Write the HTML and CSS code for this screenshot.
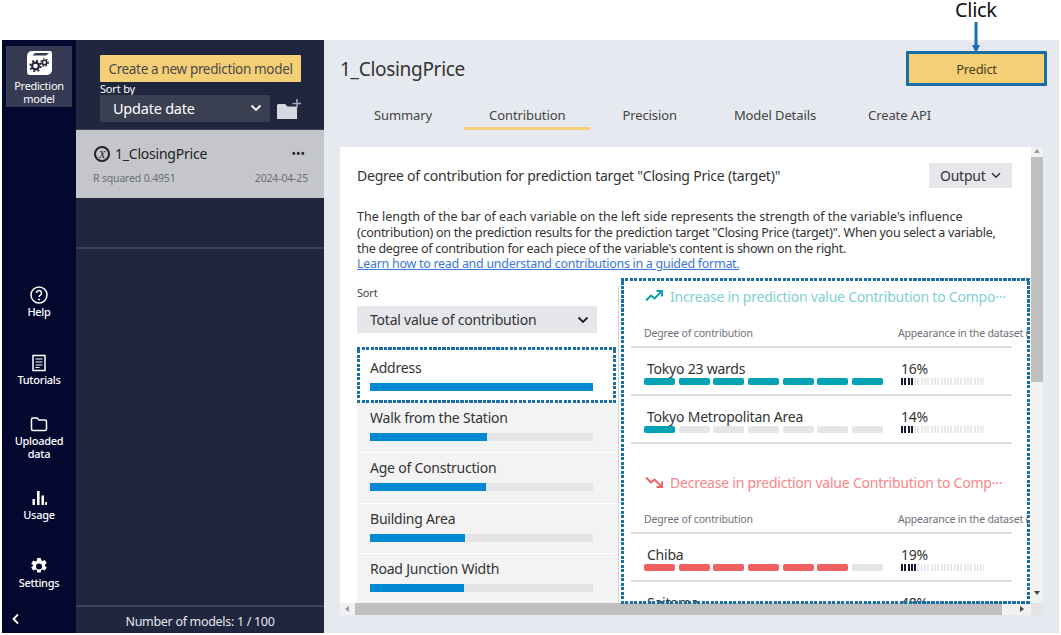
FILE: index.html
```html
<!DOCTYPE html>
<html lang="en">
<head>
    <meta charset="UTF-8">
    <meta name="viewport" content="width=device-width, initial-scale=1.0">
    <title>Prediction model - Contribution</title>
    <link rel="stylesheet" href="styles.css">
</head>
<body>
    <div class="app">
        <nav class="rail">
            <div class="rail-active">
                <svg width="26" height="26" viewBox="0 0 26 26">
                    <path d="M6 1h18a2 2 0 0 1 2 2v17a5 5 0 0 1-5 5H4a3 3 0 0 1-3-3V6a5 5 0 0 1 5-5z" fill="#fff"/>
                    <path d="M6.5 5.5L9 3h14l-3 2.5z" fill="#363a52"/>
                    <circle cx="9.5" cy="16" r="3.4" fill="none" stroke="#23263a" stroke-width="2.2"/>
                    <circle cx="9.5" cy="16" r="5.3" fill="none" stroke="#23263a" stroke-width="1.8" stroke-dasharray="2 2.16"/>
                    <circle cx="18.5" cy="12.5" r="2.2" fill="none" stroke="#23263a" stroke-width="1.6"/>
                    <circle cx="18.5" cy="12.5" r="3.6" fill="none" stroke="#23263a" stroke-width="1.4" stroke-dasharray="1.5 1.5"/>
                </svg>
                <span>Prediction<br>model</span>
            </div>
            <div class="rail-items">
                <a class="rail-item">
                    <svg width="20" height="20" viewBox="0 0 20 20"><circle cx="10" cy="10" r="8" fill="none" stroke="#fff" stroke-width="1.5"/><path d="M7.5 8a2.5 2.5 0 1 1 3.8 2.1c-.9.6-1.3 1-1.3 2" fill="none" stroke="#fff" stroke-width="1.5"/><circle cx="10" cy="14.5" r="1" fill="#fff"/></svg>
                    <span>Help</span>
                </a>
                <a class="rail-item">
                    <svg width="20" height="20" viewBox="0 0 20 20"><path d="M4 2.5h12v15H4z" fill="none" stroke="#fff" stroke-width="1.5"/><path d="M6.5 6h7M6.5 9h7M6.5 12h7M6.5 14.5h4" stroke="#fff" stroke-width="1.2"/></svg>
                    <span>Tutorials</span>
                </a>
                <a class="rail-item">
                    <svg width="20" height="20" viewBox="0 0 20 20"><path d="M2.5 15V5.5A1.5 1.5 0 0 1 4 4h4l2 2h6a1.5 1.5 0 0 1 1.5 1.5V15a1.5 1.5 0 0 1-1.5 1.5H4A1.5 1.5 0 0 1 2.5 15z" fill="none" stroke="#fff" stroke-width="1.5"/></svg>
                    <span>Uploaded<br>data</span>
                </a>
                <a class="rail-item">
                    <svg width="20" height="20" viewBox="0 0 20 20"><path d="M3.5 11h2.4v6H3.5zM8 3h2.6v14H8zM12.5 7.5H15V17h-2.5zM16.2 14H18v3h-1.8z" fill="#fff"/></svg>
                    <span>Usage</span>
                </a>
                <a class="rail-item">
                    <svg width="20" height="20" viewBox="0 0 20 20"><path d="M8.3 1.5h3.4l.5 2.3 1.5.7 2.1-1.100 2 3-1.800 1.500v1.600l1.800 1.500-2 3-2.100-1.100-1.500.7-.5 2.300H8.300l-.5-2.300-1.500-.7-2.100 1.100-2-3 1.800-1.500V8.400L2.200 6.900l2-3 2.100 1.100 1.500-.7zM10 7a3 3 0 1 0 0 6 3 3 0 0 0 0-6z" fill="#fff" fill-rule="evenodd" transform="translate(0 0.5)"/></svg>
                    <span>Settings</span>
                </a>
            </div>
            <svg class="rail-collapse" width="10" height="12" viewBox="0 0 10 12"><path d="M7 1.5L2.5 6 7 10.5" fill="none" stroke="#fff" stroke-width="1.8"/></svg>
        </nav>

        <aside class="panel">
            <div class="panel-top">
                <button class="btn-create">Create a new prediction model</button>
                <div class="sort-label">Sort by</div>
                <div class="sort-row">
                    <div class="sort-select">
                        <span>Update date</span>
                        <svg width="12" height="8" viewBox="0 0 12 8"><path d="M1.5 1.5L6 6l4.5-4.5" fill="none" stroke="#fff" stroke-width="1.8"/></svg>
                    </div>
                    <svg width="25" height="22" viewBox="0 0 25 22"><path d="M1 7.5A1.5 1.5 0 0 1 2.5 6H9l2.5 2.5H21V21H1z" fill="#d5d8df"/><path d="M21 1v9M16.5 5.5H25" stroke="#a4a8b4" stroke-width="1.6"/></svg>
                </div>
            </div>
            <div class="model-item">
                <div class="model-name">
                    <span class="model-icon">X</span>
                    <span>1_ClosingPrice</span>
                    <span class="model-dots">•••</span>
                </div>
                <div class="model-meta">
                    <span>R squared 0.4951</span>
                    <span>2024-04-25</span>
                </div>
            </div>
            <div class="panel-empty"></div>
            <div class="panel-footer">Number of models: 1 / 100</div>
        </aside>

        <main class="main">
            <div class="main-head">
                <h1>1_ClosingPrice</h1>
                <button class="btn-predict">Predict</button>
            </div>
            <div class="tabs">
                <a class="tab">Summary</a>
                <a class="tab tab-active">Contribution</a>
                <a class="tab">Precision</a>
                <a class="tab">Model Details</a>
                <a class="tab">Create API</a>
            </div>

            <section class="card">
                <div class="card-body">
                    <div class="card-title">
                        <h2>Degree of contribution for prediction target "Closing Price (target)"</h2>
                        <button class="btn-output">Output
                            <svg width="10" height="7" viewBox="0 0 10 7"><path d="M1 1.2l4 4 4-4" fill="none" stroke="#333" stroke-width="1.6"/></svg>
                        </button>
                    </div>
                    <p class="intro">The length of the bar of each variable on the left side represents the strength of the variable's influence<br>(contribution) on the prediction results for the prediction target "Closing Price (target)". When you select a variable,<br>the degree of contribution for each piece of the variable's content is shown on the right.<br><a class="intro-link">Learn how to read and understand contributions in a guided format.</a></p>

                    <div class="columns">
                        <div class="vars">
                            <div class="vars-label">Sort</div>
                            <div class="vars-select">
                                <span>Total value of contribution</span>
                                <svg width="12" height="8" viewBox="0 0 12 8"><path d="M1.5 1.5L6 6l4.5-4.5" fill="none" stroke="#222" stroke-width="1.8"/></svg>
                            </div>
                            <div class="var var-selected">
                                <div>Address</div>
                                <div class="var-bar"><div class="var-fill" style="width: 100%"></div></div>
                            </div>
                            <div class="var">
                                <div>Walk from the Station</div>
                                <div class="var-bar"><div class="var-fill" style="width: 52.5%"></div></div>
                            </div>
                            <div class="var">
                                <div>Age of Construction</div>
                                <div class="var-bar"><div class="var-fill" style="width: 52%"></div></div>
                            </div>
                            <div class="var">
                                <div>Building Area</div>
                                <div class="var-bar"><div class="var-fill" style="width: 42.8%"></div></div>
                            </div>
                            <div class="var">
                                <div>Road Junction Width</div>
                                <div class="var-bar"><div class="var-fill" style="width: 42.2%"></div></div>
                            </div>
                        </div>

                        <div class="detail">
                            <h3 class="detail-head detail-up">
                                <svg width="18" height="12" viewBox="0 0 18 12"><path d="M1 10.5l5-5 3.5 3L16 2" fill="none" stroke="#00a0b0" stroke-width="1.8"/><path d="M11.5 1H17v5.500" fill="none" stroke="#00a0b0" stroke-width="1.8"/></svg>
                                <span>Increase in prediction value Contribution to Compo···</span>
                            </h3>
                            <div class="detail-cols"><span>Degree of contribution</span><span>Appearance in the dataset (%)</span></div>
                            <div class="row">
                                <div class="row-main">
                                    <div class="row-name">Tokyo 23 wards</div>
                                    <div class="segs segs-up"><i class="on"></i><i class="on"></i><i class="on"></i><i class="on"></i><i class="on"></i><i class="on"></i><i class="on"></i></div>
                                </div>
                                <div class="row-pct">
                                    <div>16%</div>
                                    <div class="ticks"><div class="ticks-fill" style="width: 13px"></div></div>
                                </div>
                            </div>
                            <div class="row">
                                <div class="row-main">
                                    <div class="row-name">Tokyo Metropolitan Area</div>
                                    <div class="segs segs-up"><i class="on"></i><i></i><i></i><i></i><i></i><i></i><i></i></div>
                                </div>
                                <div class="row-pct">
                                    <div>14%</div>
                                    <div class="ticks"><div class="ticks-fill" style="width: 13px"></div></div>
                                </div>
                            </div>

                            <h3 class="detail-head detail-down">
                                <svg width="18" height="12" viewBox="0 0 18 12"><path d="M1 1.5l5 5 3.5-3L16 10" fill="none" stroke="#ee5f5f" stroke-width="1.8"/><path d="M11.5 11H17V5.5" fill="none" stroke="#ee5f5f" stroke-width="1.8"/></svg>
                                <span>Decrease in prediction value Contribution to Comp···</span>
                            </h3>
                            <div class="detail-cols"><span>Degree of contribution</span><span>Appearance in the dataset (%)</span></div>
                            <div class="row">
                                <div class="row-main">
                                    <div class="row-name">Chiba</div>
                                    <div class="segs segs-down"><i class="on"></i><i class="on"></i><i class="on"></i><i class="on"></i><i class="on"></i><i class="on"></i><i></i></div>
                                </div>
                                <div class="row-pct">
                                    <div>19%</div>
                                    <div class="ticks"><div class="ticks-fill" style="width: 16px"></div></div>
                                </div>
                            </div>
                            <div class="row">
                                <div class="row-main">
                                    <div class="row-name">Saitama</div>
                                </div>
                                <div class="row-pct">
                                    <div>48%</div>
                                </div>
                            </div>
                        </div>
                    </div>
                </div>
                <div class="vscroll"><div class="vscroll-thumb"></div></div>
                <div class="hscroll"><div class="hscroll-thumb"></div></div>
                <div class="scroll-corner"></div>
            </section>
        </main>
    </div>

    <!-- annotations on top of the screenshot -->
    <div class="note-click">Click</div>
    <svg class="note-arrow" width="10" height="31" viewBox="0 0 10 31"><path d="M5 0v25" stroke="#1a6ea8" stroke-width="3"/><path d="M1 23h8l-4 8z" fill="#1a6ea8"/></svg>
    <div class="note-box note-box-address"></div>
    <div class="note-box note-box-detail"></div>
</body>
</html>
```

FILE: styles.css
```css
* {
    margin: 0;
    padding: 0;
    box-sizing: border-box;
    font-family: "Noto Sans", sans-serif;
    letter-spacing: -0.016em;
}

body {
    background: #fff;
    color: #333;
    width: 1061px;
    height: 635px;
    padding: 40px 2px 2px;
    position: relative;
    overflow: hidden;
}

.app {
    display: flex;
    height: 593px;
}

/* left icon rail */
.rail {
    width: 74px;
    background: #03082e;
    color: #fff;
    display: flex;
    flex-direction: column;
    align-items: center;
    position: relative;
}

.rail span {
    letter-spacing: -0.025em;
}

.rail-active {
    width: 66px;
    height: 61px;
    margin-top: 6px;
    background: #363a52;
    display: flex;
    flex-direction: column;
    align-items: center;
    padding-top: 4px;
    text-align: center;
    font-size: 11px;
    line-height: 13px;
}

.rail-active svg {
    margin-bottom: 3px;
}

.rail-items {
    margin-top: 178px;
    display: grid;
    grid-template-rows: 68px 61px 74px 68px auto;
    justify-items: center;
}

.rail-item {
    display: flex;
    flex-direction: column;
    align-items: center;
    text-align: center;
    font-size: 11px;
    font-weight: 500;
    line-height: 13px;
}

.rail-collapse {
    position: absolute;
    left: 9px;
    bottom: 8px;
}

/* model list */
.panel {
    width: 248px;
    background: #20263e;
    color: #fff;
    display: flex;
    flex-direction: column;
}

.panel-top {
    height: 90px;
    padding: 15px 23px 0 24px;
    border-bottom: 1px solid #3d4256;
}

.btn-create {
    display: block;
    width: 201px;
    height: 27px;
    background: #f5cf76;
    border: none;
    border-radius: 1px;
    color: #4a4a4a;
    font-size: 13.5px;
    letter-spacing: -0.34px;
}

.sort-label {
    font-size: 11px;
    line-height: 13px;
}

.sort-row {
    display: flex;
    align-items: center;
    justify-content: space-between;
}

.sort-select {
    width: 170px;
    height: 27px;
    background: #3a3f52;
    display: flex;
    align-items: center;
    justify-content: space-between;
    padding: 0 8px 2px 13px;
    font-size: 14.5px;
    letter-spacing: -0.36px;
}

.model-item {
    height: 68px;
    background: #c4c6ca;
    color: #222;
    padding: 14px 16px 0 17px;
}

.model-name {
    display: flex;
    align-items: center;
    gap: 5px;
    font-size: 14px;
    letter-spacing: -0.36px;
    line-height: 20px;
}

.model-icon {
    width: 16px;
    height: 16px;
    border: 2px solid #222;
    border-radius: 50%;
    font-family: "Liberation Serif", serif;
    font-style: italic;
    font-size: 11px;
    line-height: 12px;
    text-align: center;
    margin-left: 1px;
}

.model-dots {
    margin-left: auto;
    margin-right: 3px;
    font-size: 12px;
    letter-spacing: 0;
}

.model-meta {
    display: flex;
    justify-content: space-between;
    margin-top: 7px;
    font-size: 10.5px;
    line-height: 14px;
    color: #6c6e74;
}

.panel-empty {
    flex: 1;
    background: linear-gradient(#3d4256, #3d4256) 0 49px / 100% 2px no-repeat;
}

.panel-footer {
    height: 28px;
    border-top: 2px solid #3d4256;
    text-align: center;
    font-size: 12.5px;
    letter-spacing: -0.31px;
    line-height: 30px;
    color: #e4e6ea;
}

/* main area */
.main {
    flex: 1;
    background: #e6e9ef;
    padding: 11px 0 0 16px;
}

.main-head {
    display: flex;
    justify-content: space-between;
    align-items: center;
    height: 35px;
    padding-right: 12px;
}

.main-head h1 {
    font-size: 19px;
    font-weight: 400;
    color: #333;
}

.btn-predict {
    width: 141px;
    height: 35px;
    background: #f5cf76;
    border: 3px solid #1a6ea8;
    border-radius: 1px;
    font-size: 13px;
    letter-spacing: -0.3px;
    color: #4a4020;
}

.tabs {
    display: flex;
    gap: 7px;
    margin: 17px 0 0 9px;
}

.tab {
    padding: 0 25px;
    height: 27px;
    font-size: 13px;
    letter-spacing: -0.1px;
    line-height: 24px;
    color: #444;
}

.tab:last-child {
    margin-left: -5px;
}

.tab-active {
    border-bottom: 3px solid #f5cf76;
}

.card {
    width: 703px;
    height: 468px;
    margin-top: 17px;
    background: #fff;
    display: grid;
    grid-template-columns: 1fr 12px;
    grid-template-rows: 1fr 12px;
}

.card-body {
    padding: 16px 0 0 17px;
    overflow: hidden;
    min-height: 0;
}

.card-title {
    display: flex;
    justify-content: space-between;
    align-items: center;
    width: 655px;
    height: 25px;
}

.card-title h2 {
    font-size: 14px;
    font-weight: 400;
    color: #333;
}

.btn-output {
    width: 83px;
    height: 25px;
    background: #e6e7ea;
    border: none;
    font-size: 14px;
    color: #333;
}

.btn-output svg {
    margin-left: 2px;
    vertical-align: 2px;
}

.intro {
    margin-top: 21px;
    font-size: 12.5px;
    letter-spacing: -0.29px;
    line-height: 15.8px;
    white-space: nowrap;
    color: #333;
}

.intro::first-line {
    letter-spacing: 0;
}

.intro-link {
    letter-spacing: -0.29px;
    color: #3a78d8;
    text-decoration: underline;
}

.columns {
    display: flex;
    margin-top: 14px;
}

.vars {
    width: 261px;
    flex: none;
    font-size: 14px;
}

.vars-label {
    font-size: 11px;
    line-height: 13px;
    color: #444;
}

.vars-select {
    width: 240px;
    height: 27px;
    margin: 7px 0 15px;
    padding: 0 8px 0 13px;
    background: #e6e7ea;
    display: flex;
    align-items: center;
    justify-content: space-between;
}

.var {
    height: 50.3px;
    padding: 5px 25px 0 13px;
    background: #f3f3f4;
    border-bottom: 1px solid #fff;
    line-height: 20px;
    color: #333;
}

.var-selected {
    height: 55px;
    padding-top: 10px;
    background: #fff;
    border-bottom: none;
}

.var-bar {
    height: 8px;
    margin-top: 5px;
    background: #e4e4e6;
}

.var-fill {
    height: 100%;
    background: #0089d2;
}

.detail {
    width: 410px;
    flex: none;
    padding-left: 12px;
    border-left: 1px solid #d8d8da;
    overflow: hidden;
}

.detail-head {
    display: flex;
    align-items: center;
    gap: 7px;
    margin-left: 14px;
    height: 20px;
    font-size: 14px;
    font-weight: 400;
    white-space: nowrap;
}

.detail-up {
    color: #7fcfd4;
}

.detail-down {
    color: #fb8488;
    margin-top: 28px;
}

.detail-cols {
    width: 381px;
    height: 42px;
    display: flex;
    padding: 20px 0 0 13px;
    border-bottom: 2px solid #ddd;
    font-size: 10.5px;
    letter-spacing: -0.2px;
    line-height: 14px;
    color: #6d7079;
    white-space: nowrap;
}

.detail-cols span:first-child {
    width: 254px;
    flex: none;
}

.row {
    width: 381px;
    height: 48px;
    display: flex;
    padding: 11px 0 0 13px;
    border-bottom: 2px solid #ddd;
    font-size: 14px;
    line-height: 20px;
    color: #333;
}

.row-main {
    width: 254px;
    flex: none;
}

.row-name {
    margin-left: 3px;
}

.row-pct {
    margin-left: 3px;
}

.segs {
    width: 239px;
    display: flex;
    gap: 3.5px;
    margin-top: -1px;
}

.segs i {
    flex: 1;
    height: 7px;
    border-radius: 2px;
    background: #e5e5e6;
}

.segs-up .on {
    background: #00a2b4;
}

.segs-down .on {
    background: #f06060;
}

.ticks {
    width: 83px;
    height: 7px;
    margin-top: -1px;
    background: repeating-linear-gradient(90deg, #e8e8ea 0, #e8e8ea 2px, #fff 2px, #fff 3.3px);
}

.ticks-fill {
    height: 100%;
    background: repeating-linear-gradient(90deg, #15193a 0, #15193a 2px, #fff 2px, #fff 3.3px);
}

/* hand drawn scrollbars */
.vscroll {
    background: #f1f1f2;
    position: relative;
}

.vscroll-thumb {
    height: 225px;
    margin-top: 10px;
    background: #bfbfbf;
}

.vscroll::before,
.vscroll::after {
    content: "";
    position: absolute;
    left: 3px;
    border: 3px solid transparent;
}

.vscroll::before {
    top: 2px;
    border-bottom: 4px solid #999;
    border-top: none;
}

.vscroll::after {
    bottom: 8px;
    border-top: 4px solid #444;
    border-bottom: none;
}

.hscroll {
    background: #f1f1f2;
    padding-left: 15px;
    position: relative;
}

.hscroll-thumb {
    width: 647px;
    height: 100%;
    background: #bfbfbf;
}

.hscroll::before,
.hscroll::after {
    content: "";
    position: absolute;
    top: 3px;
    border: 3px solid transparent;
}

.hscroll::before {
    left: 5px;
    border-right: 4px solid #999;
    border-left: none;
}

.hscroll::after {
    right: 7px;
    border-left: 4px solid #444;
    border-right: none;
}

.scroll-corner {
    background: #e4e4e4;
}

/* annotations */
.note-click {
    position: absolute;
    left: 955px;
    top: 0;
    font-size: 20px;
    line-height: 20px;
    color: #111;
}

.note-arrow {
    position: absolute;
    left: 971px;
    top: 22px;
}

.note-box {
    position: absolute;
    background:
        repeating-linear-gradient(90deg, #1a6ea8 0, #1a6ea8 3px, transparent 3px, transparent 4.5px) top / 100% 3px no-repeat,
        repeating-linear-gradient(90deg, #1a6ea8 0, #1a6ea8 3px, transparent 3px, transparent 4.5px) bottom / 100% 3px no-repeat,
        repeating-linear-gradient(0deg, #1a6ea8 0, #1a6ea8 3px, transparent 3px, transparent 4.5px) left / 3px 100% no-repeat,
        repeating-linear-gradient(0deg, #1a6ea8 0, #1a6ea8 3px, transparent 3px, transparent 4.5px) right / 3px 100% no-repeat;
}

.note-box-address {
    left: 357px;
    top: 347px;
    width: 259px;
    height: 56px;
}

.note-box-detail {
    left: 621px;
    top: 278px;
    width: 409px;
    height: 326px;
}
```
